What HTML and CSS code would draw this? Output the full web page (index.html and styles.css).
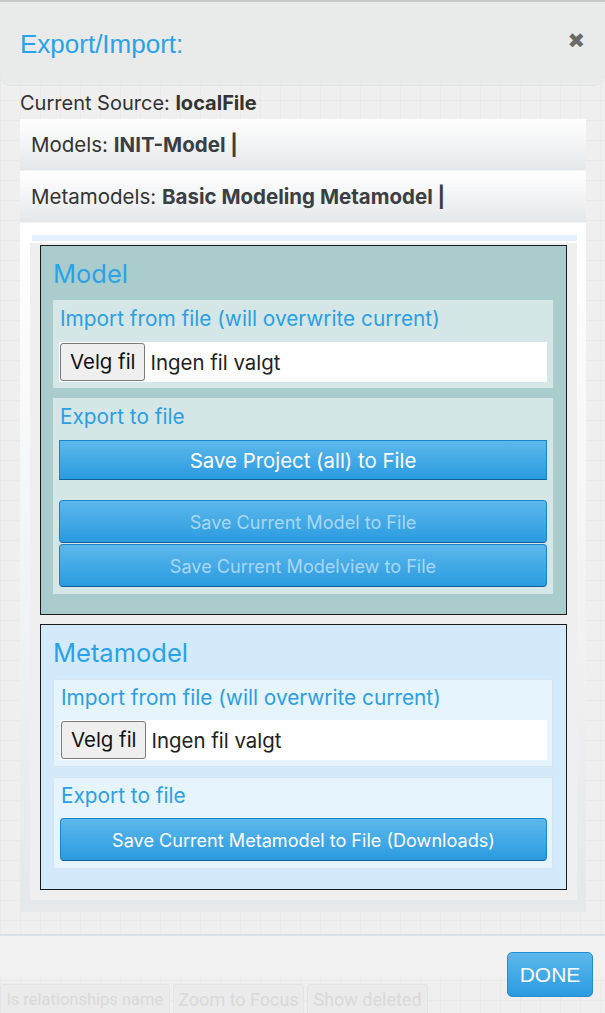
FILE: index.html
```html
<!DOCTYPE html>
<html>
<head>
<meta charset="utf-8">
<link rel="stylesheet" href="styles.css">
</head>
<body>
<div class="app">
  <div class="toolbar">
    <span class="tb-btn tb-1">ls relationships name</span>
    <span class="tb-btn tb-2">Zoom to Focus</span>
    <span class="tb-btn tb-3">Show deleted</span>
  </div>
  <div class="modal">
    <header class="mhead">
      <h2 class="mtitle">Export/Import:</h2>
      <span class="close">&#x2716;</span>
    </header>
    <div class="mbody">
      <div class="source">Current Source: <b>localFile</b></div>
      <ul class="list">
        <li class="li">Models: <b>INIT-Model |</b></li>
        <li class="li">Metamodels: <b>Basic Modeling Metamodel |</b></li>
        <li class="li li-big">
          <div class="strip"></div>
          <div class="panel">
            <section class="box box-model">
              <h3 class="box-title">Model</h3>
              <div class="sec">
                <div class="sec-label">Import from file (will overwrite current)</div>
                <div class="file"><span class="file-btn">Velg fil</span><span class="file-txt">Ingen fil valgt</span></div>
              </div>
              <div class="sec sec-export">
                <div class="sec-label">Export to file</div>
                <button class="btn btn-main">Save Project (all) to File</button>
                <div class="btn-stack">
                  <button class="btn btn-dis">Save Current Model to File</button>
                  <button class="btn btn-dis">Save Current Modelview to File</button>
                </div>
              </div>
            </section>
            <section class="box box-meta">
              <h3 class="box-title">Metamodel</h3>
              <div class="sec">
                <div class="sec-label">Import from file (will overwrite current)</div>
                <div class="file"><span class="file-btn">Velg fil</span><span class="file-txt">Ingen fil valgt</span></div>
              </div>
              <div class="sec">
                <div class="sec-label">Export to file</div>
                <button class="btn btn-meta">Save Current Metamodel to File (Downloads)</button>
              </div>
            </section>
          </div>
        </li>
      </ul>
    </div>
    <footer class="mfoot">
      <button class="done">DONE</button>
    </footer>
  </div>
</div>
</body>
</html>
```

FILE: styles.css
```css
* { box-sizing: border-box; }
html, body { margin: 0; padding: 0; }
body {
  width: 605px;
  height: 1013px;
  overflow: hidden;
  font-family: Inter, "Liberation Sans", Arial, sans-serif;
  color: #333;
  background-color: #efefef;
  background-image:
    linear-gradient(to right, rgba(0,0,0,0.025) 1px, transparent 1px),
    linear-gradient(to bottom, rgba(0,0,0,0.025) 1px, transparent 1px);
  background-size: 20px 20px;
}
.app { position: relative; width: 605px; height: 1013px; }

.toolbar {
  position: absolute;
  left: 0; right: 0; top: 977px; bottom: 0;
  border-top: 1px solid #e2e2e2;
  display: flex;
  gap: 3px;
  padding: 6px 0 0 0;
}
.tb-btn {
  height: 32px;
  border: 1px solid #e4e4e4;
  border-radius: 3px;
  background: #ebebeb;
  color: #d9d9d9;
  font-family: Roboto, sans-serif;
  font-size: 18px;
  line-height: 30px;
  padding: 0;
  text-align: center;
  white-space: nowrap;
}
.tb-1 { width: 170px; font-size: 16.5px; }
.tb-2 { width: 131px; }
.tb-3 { width: 121px; }

.modal { position: relative; }

.mhead {
  height: 86px;
  border-top: 2px solid #c6c6c6;
  background: rgba(232,233,233,0.92);
  border-bottom: 1px solid #dfe2e5;
  border-radius: 0 0 12px 12px;
  display: flex;
  align-items: center;
  justify-content: space-between;
  padding: 0 20px 0 20px;
}
.mtitle {
  margin: 0;
  font-family: "Liberation Sans", Arial, sans-serif;
  font-weight: normal;
  font-size: 26px;
  color: #2aa2e8;
  position: relative;
  top: 1px;
}
.close {
  font-family: "DejaVu Sans", sans-serif;
  color: #6a6a6a;
  font-size: 21px;
  font-weight: bold;
  position: relative;
  top: -3px;
  right: 0;
}

.mbody { padding: 6px 19px 0 20px; }
.source {
  font-size: 20px;
  line-height: 22px;
  color: #333;
}
.source b { font-weight: 700; }

.list {
  list-style: none;
  margin: 5px 0 0 0;
  padding: 0;
}
.li {
  background: linear-gradient(to bottom, #ffffff, #e5e8eb);
  height: 52px;
  padding: 0 11px;
  font-size: 20.5px;
  line-height: 52px;
  color: #333;
  border-bottom: 1px solid #f3f4f5;
}
.li b { font-weight: 700; color: #3a3f44; }
.li-big {
  height: 689px;
  line-height: normal;
  padding: 12px 9px 11px 10px;
  border-bottom: none;
}
.strip {
  height: 6px;
  background: #e4f1fd;
  margin: 0 0 2px 2px;
}
.panel {
  background: #efefef;
  padding: 2px 10px 10px 10px;
  display: flex;
  flex-direction: column;
  gap: 9px;
}
.box {
  border: 1px solid #1c1c1c;
  padding: 12px 13px 20px 12px;
}
.box-model { background: #aacccc; height: 370px; }
.box-meta { background: #d2eafc; height: 266px; padding-bottom: 22px; }
.box-title {
  margin: 0 0 11px 0;
  font-weight: normal;
  font-size: 25.5px;
  line-height: 31px;
  color: #2aa2e8;
}
.box-meta .box-title { margin-bottom: 11px; }

.sec {
  background: #d4e6e6;
  padding: 7px 6px 6px 6px;
  margin-bottom: 10px;
}
.box-meta .sec {
  background: #e6f4fe;
  border: 1px solid #d8e5ef;
  padding: 6px 5px 6px 6px;
}
.sec-label {
  color: #2b9fe2;
  font-size: 20.8px;
  line-height: 24px;
  margin-bottom: 11px;
  padding-left: 1px;
}
.box-meta .sec-label { margin-bottom: 10px; }
.file {
  display: flex;
  align-items: center;
  background: #fff;
  height: 40px;
  padding: 0 2px 0 1px;
}
.file-btn {
  height: 38px;
  padding: 0 8px 0 9px;
  border: 1px solid #7a7a7a;
  border-radius: 3px;
  background: #efefef;
  color: #111;
  font-size: 20.4px;
  line-height: 36px;
}
.file-txt {
  margin-left: 6px;
  font-size: 20.4px;
  color: #222;
}

.sec-export { padding-bottom: 6px; }
.btn {
  display: block;
  width: 100%;
  border: 1px solid #1d83c9;
  border-bottom-color: #15609a;
  background: linear-gradient(to bottom, #5cb8ec, #2a9be0);
  color: #fff;
  font-family: Inter, "Liberation Sans", Arial, sans-serif;
  cursor: pointer;
  padding: 0;
}
.btn-main {
  height: 40px;
  font-size: 20.4px;
  border-radius: 0;
  margin-top: 4px;
}
.btn-stack { margin-top: 20px; }
.btn-dis {
  height: 43px;
  font-size: 18.1px;
  border-radius: 4px;
  color: #a9d7f4;
  margin-bottom: 1px;
}
.btn-meta {
  height: 43px;
  font-size: 18.1px;
  border-radius: 4px;
  margin-top: 1px;
  margin-bottom: 1px;
}

.mfoot {
  margin-top: 22px;
  border-top: 2px solid #dadfe4;
  height: 44px;
  background: rgba(242,242,242,0.85);
  position: relative;
}
.done {
  position: absolute;
  right: 12px;
  top: 16px;
  width: 86px;
  height: 45px;
  border: 1px solid #1f8ed4;
  border-radius: 5px;
  background: linear-gradient(to bottom, #5db8ec, #2a9be0);
  color: #fff;
  font-family: "Liberation Sans", Arial, sans-serif;
  font-size: 21px;
  padding: 0;
}
```
